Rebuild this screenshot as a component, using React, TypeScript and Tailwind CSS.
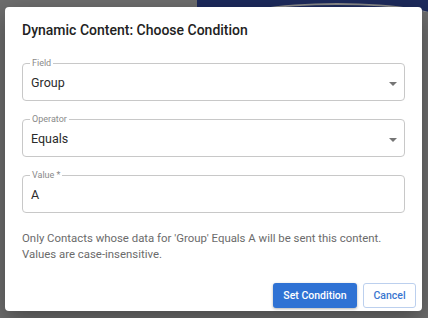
import React from "react";

const fields = [
  { label: "Field", value: "Group", select: true },
  { label: "Operator", value: "Equals", select: true },
  { label: "Value *", value: "A", select: false },
];

const OutlinedField = ({ label, value, select }: { label: string; value: string; select: boolean }) => (
  <fieldset className="rounded-[4px] border border-[#c8c8c8] px-[7px]">
    <legend className="px-[2px] text-[9px] leading-[10px] text-[#8a8a8a]">{label}</legend>
    <div className="flex h-[32px] items-center pb-[1px] pl-[1px] text-[12.5px] text-[#2b2b2b]">
      <span className="flex-1">{value}</span>
      {select && (
        <svg width="8" height="4" viewBox="0 0 8 4">
          <path d="M0 0 L4 4 L8 0 Z" fill="#757575" />
        </svg>
      )}
    </div>
  </fieldset>
);

const App = () => {
  return (
    <div className="relative h-[318px] w-[428px] overflow-hidden font-['Roboto',sans-serif]">
      {/* dimmed page behind the dialog */}
      <div className="flex h-full bg-[#6e6e6e]">
        <div className="flex w-[5px] flex-col pt-[54px]">
          <div className="h-[3px] bg-[#2e2e2e]" />
          <div className="mt-[113px] h-[26px] rounded-r-full bg-[#2e2e2e]" />
        </div>
        <div className="flex-1">
          <div className="ml-[197px] h-[12px] overflow-hidden bg-[#1d2a5c]">
            <div className="ml-[30px] mt-[3px] h-[40px] w-[220px] rounded-[50%] border-t-[2px] border-[#8a8a8a]" />
          </div>
        </div>
        <div className="flex w-[6px] flex-col">
          <div className="h-[12px] bg-[#1d2a5c]" />
          <div className="mt-[54px] h-[1px] bg-[#444]" />
          <div className="mt-[71px] h-[22px] bg-[#1d2a5c]" />
          <div className="mt-[36px] h-[1px] bg-[#444]" />
          <div className="mt-[75px] h-[20px] bg-[#1d2a5c]" />
        </div>
      </div>

      {/* dialog */}
      <div className="absolute inset-0 pl-[5px] pt-[7px]">
        <div className="flex h-[304px] w-[417px] flex-col rounded-[4px] bg-white shadow-[0_8px_24px_rgba(0,0,0,0.35)]">
          <h2 className="px-[17px] pt-[13px] text-[14px] font-medium leading-[20px] text-[#222]">
            Dynamic Content: Choose Condition
          </h2>
          <div className="mt-[18px] flex flex-col gap-[13px] px-[17px]">
            {fields.map((f) => (
              <OutlinedField key={f.label} {...f} />
            ))}
          </div>
          <p className="mt-[17px] px-[17px] text-[11.4px] leading-[16px] text-[#6b6b6b]">
            Only Contacts whose data for 'Group' Equals A will be sent this content.
            <br />
            Values are case-insensitive.
          </p>
          <div className="mt-auto flex justify-end gap-[6px] pb-[3px] pr-[6px]">
            <button className="h-[25px] w-[84px] rounded-[3px] bg-[#2f72d4] text-[10.5px] font-medium text-white shadow-[0_1px_3px_rgba(0,0,0,0.3)]">
              Set Condition
            </button>
            <button className="h-[25px] w-[53px] rounded-[3px] border border-[#bcd0ee] bg-white text-[10.5px] font-medium text-[#3a76d0]">
              Cancel
            </button>
          </div>
        </div>
      </div>
    </div>
  );
};

export default App;
